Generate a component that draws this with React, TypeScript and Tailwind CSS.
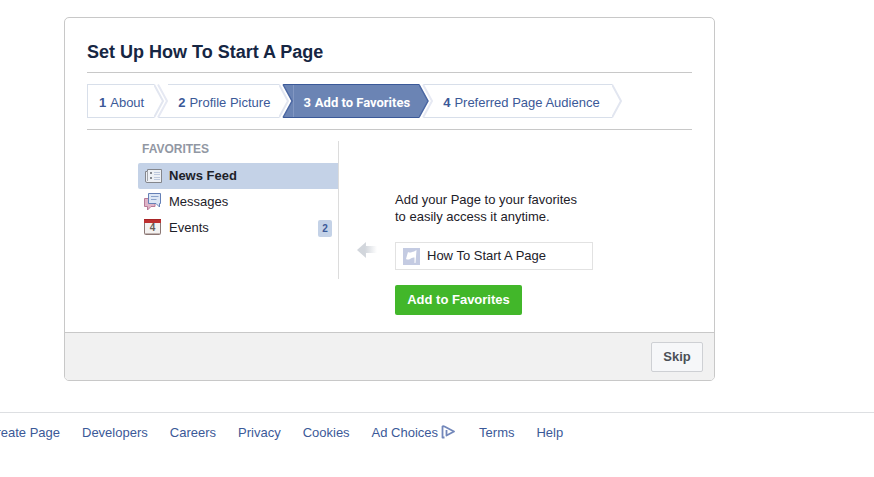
import type { ReactNode } from "react";

const STEPS = ["About", "Profile Picture", "Add to Favorites", "Preferred Page Audience"];
const ACTIVE_STEP = 2;

const FOOTER_LINKS = ["Create Page", "Developers", "Careers", "Privacy", "Cookies", "Ad Choices", "Terms", "Help"];

interface ChevronProps {
  /** Step to the left is the current one */
  leftActive: boolean;
  /** Step to the right is the current one */
  rightActive: boolean;
  last: boolean;
}

/** Arrow-shaped divider between two wizard steps */
function Chevron({ leftActive, rightActive, last }: ChevronProps) {
  return (
    <svg className="h-[34px] w-[14px] shrink-0" viewBox="0 0 14 34" aria-hidden="true">
      {leftActive && <path d="M0 0L9 17L0 34Z" fill="#6b84b4" />}
      {leftActive && <path d="M4 .5H14" stroke="#d8dfea" />}
      {rightActive && <path d="M4 0H14V34H4L13 17Z" fill="#6b84b4" />}
      {rightActive && <path d="M4 .5H14M4 33.5H14" stroke="#3b5998" />}
      {!rightActive && !last && <path d="M4 33.5H14" stroke="#d8dfea" />}
      <path
        d="M0 .5L9 17L0 33.5"
        fill="none"
        stroke={leftActive ? "#4a66a2" : "#e2e6f0"}
        strokeWidth={leftActive ? 1.5 : 2}
      />
      {!last && (
        <path
          d="M4 .5L13 17L4 33.5"
          fill="none"
          stroke={rightActive ? "#4a66a2" : "#e6e9f3"}
          strokeWidth={rightActive ? 1.5 : 2}
        />
      )}
    </svg>
  );
}

function Wizard() {
  return (
    <ol className="flex text-[13px]">
      {STEPS.map((step, i) => {
        const active = i === ACTIVE_STEP;
        const last = i === STEPS.length - 1;
        return (
          <li key={step} className="flex">
            <span
              className={
                "flex h-[34px] items-center gap-1 border-y pt-[3px] whitespace-nowrap " +
                (i === 0 ? "border-l pl-[11px] " : "pl-[10px] ") +
                (last ? "pr-3 " : i === 0 ? "pr-[10px] " : "pr-[9px] ") +
                (active
                  ? "border-[#3b5998] bg-[#6b84b4] font-['Roboto',Arial,sans-serif] text-white shadow-[inset_1px_0_0_#8297c2]"
                  : "border-[#d8dfea] text-[#3b5998]")
              }
            >
              <b>{i + 1}</b>
              <span className={active ? "font-bold" : ""}>{step}</span>
            </span>
            <Chevron leftActive={active} rightActive={i + 1 === ACTIVE_STEP} last={last} />
          </li>
        );
      })}
    </ol>
  );
}

function NewsIcon() {
  return (
    <svg className="h-4 w-[18px]" viewBox="0 0 18 16" aria-hidden="true">
      <path d="M3.5 1.5H17.5V14.5H3Q1.5 14.5 1.5 13V3.5H3.5Z" fill="#edf0f5" stroke="#84868c" />
      <path d="M3.5 3V13" stroke="#a4a6ac" />
      <path d="M6 4h2v2H6zM6 9h2v2H6z" fill="#858991" />
      <path d="M10 4.5h6M10 6.5h6M10 9.5h6M10 11.5h6" stroke="#bdc8dd" />
    </svg>
  );
}

function MessagesIcon() {
  return (
    <svg className="h-[18px] w-[18px]" viewBox="0 0 18 18" aria-hidden="true">
      <path d="M.5 5.5H11V13.5H7L3.5 17V13.5H.5Z" fill="#dfb5c8" stroke="#b77b98" />
      <path d="M4.5 .5H16.5V10.5H15.5V14L12 10.5H4.5Z" fill="#dce6f5" stroke="#6580b7" />
      <path d="M7 3.5H14.5M7 6.5H12.5" stroke="#8ba3ca" />
    </svg>
  );
}

function EventsIcon() {
  return (
    <svg className="h-[18px] w-[18px]" viewBox="0 0 18 18" aria-hidden="true">
      <rect x=".5" y=".5" width="16" height="15" rx="1" fill="#f4f2f1" stroke="#8b7774" />
      <path d="M0 0H17V4H0Z" fill="#bd2f2f" />
      <path d="M0 .5H17" stroke="#a82527" />
      <path d="M1 14.5H16" stroke="#c2b5b2" />
      <text x="8.5" y="12" textAnchor="middle" className="fill-[#665c58] text-[10px] font-bold">
        4
      </text>
    </svg>
  );
}

interface FavoriteProps {
  icon: ReactNode;
  label: string;
  selected?: boolean;
  count?: number;
}

function Favorite({ icon, label, selected, count }: FavoriteProps) {
  return (
    <li>
      <a
        href="#"
        className={"flex h-[26px] items-center rounded-l-xs px-[6px] " + (selected ? "bg-[#c4d2e7] font-bold" : "")}
      >
        <span className="flex w-[25px]">{icon}</span>
        {label}
        {count && (
          <span className="ml-auto flex h-[17px] w-[14px] items-center justify-center rounded-xs bg-[#c4d2e7] text-[10px] font-bold text-[#3b5998]">
            {count}
          </span>
        )}
      </a>
    </li>
  );
}

export default function App() {
  return (
    <div className="overflow-hidden bg-white pt-[17px] font-['Liberation_Sans',Arial,sans-serif] text-[13px] text-[#1d2129]">
      <main className="mr-[159px] ml-16 overflow-hidden rounded-[5px] border border-[#c8c8c8]">
        <div className="px-[22px]">
          <h1 className="border-b border-[#c8c8c8] pt-[22px] pb-2 text-[18px] leading-6 font-bold text-[#162643]">
            Set Up How To Start A Page
          </h1>
          <div className="border-b border-[#c8c8c8] py-[11px]">
            <Wizard />
          </div>
          <div className="flex pt-[11px] pb-[17px] pl-[51px]">
            <nav className="h-[138px] w-[201px] shrink-0 border-r border-[#dcdcdc]">
              <h2 className="px-1 pb-[6px] text-[12px] leading-4 font-bold text-[#9197a3]">FAVORITES</h2>
              <ul className="flex flex-col">
                <Favorite icon={<NewsIcon />} label="News Feed" selected />
                <Favorite icon={<MessagesIcon />} label="Messages" />
                <Favorite icon={<EventsIcon />} label="Events" count={2} />
              </ul>
            </nav>
            <div className="flex pt-[50px] pl-[18px]">
              <svg className="mt-[51px] h-4 w-5" viewBox="0 0 20 16" aria-hidden="true">
                <defs>
                  <linearGradient id="fade">
                    <stop offset=".4" stopColor="#d2d6dc" />
                    <stop offset="1" stopColor="#d2d6dc" stopOpacity="0" />
                  </linearGradient>
                </defs>
                <path d="M0 8L9 0V4H20V11H9V16Z" fill="url(#fade)" />
              </svg>
              <div className="ml-[18px]">
                <p className="leading-[17px]">
                  Add your Page to your favorites
                  <br />
                  to easily access it anytime.
                </p>
                <div className="mt-[17px] flex h-7 w-[198px] items-center gap-[7px] border border-[#e2e2e2] pl-[7px]">
                  <svg className="h-[17px] w-[17px]" viewBox="0 0 17 17" aria-hidden="true">
                    <path d="M0 0H17V17H0Z" fill="#c4cbe2" />
                    <path d="M5 4Q7 5 9 4Q11 4 13.5 2L12.5 15H11.5V9.5Q9 9 7 11Q5 12 3 11Z" fill="#fff" />
                  </svg>
                  How To Start A Page
                </div>
                <button type="button" className="mt-[15px] h-[30px] w-[127px] rounded-xs bg-[#42b72a] font-bold text-white">
                  Add to Favorites
                </button>
              </div>
            </div>
          </div>
        </div>
        <div className="flex justify-end border-t border-[#c8c8c8] bg-[#f1f1f1] px-[11px] pt-[9px] pb-2">
          <button
            type="button"
            className="h-[30px] w-[52px] rounded-xs border border-[#ced0d4] bg-[#f6f7f9] font-bold text-[#4b4f56]"
          >
            Skip
          </button>
        </div>
      </main>
      <footer className="mt-[31px] border-t border-[#dddfe2] pt-3">
        <ul className="-ml-[13px] flex gap-[22px] leading-4 whitespace-nowrap text-[#3b5998]">
          {FOOTER_LINKS.map((link) => (
            <li key={link}>
              <a href="#" className="flex hover:underline">
                {link}
                {link === "Ad Choices" && (
                  <svg className="ml-[3px] h-[14px] w-4" viewBox="0 0 16 14" aria-hidden="true">
                    <path
                      d="M3.5 12.5H1.5V1.5Q2 .8 3.5 1.5L13 6.5L5.5 10.5V5"
                      fill="none"
                      stroke="#7287ba"
                      strokeWidth="1.8"
                      strokeLinejoin="round"
                    />
                  </svg>
                )}
              </a>
            </li>
          ))}
        </ul>
      </footer>
    </div>
  );
}
